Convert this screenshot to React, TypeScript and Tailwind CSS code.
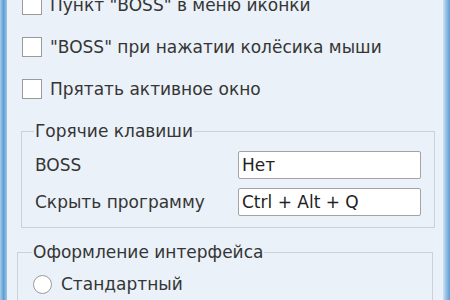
import { useState } from "react";

const Check = ({ label }: { label: string }) => (
  <label className="flex items-center h-[42px] shrink-0">
    <span className="ml-[15px] w-[20px] h-[20px] border border-[#9a9a9a] bg-white shrink-0" />
    <span className="ml-[8px] whitespace-nowrap">{label}</span>
  </label>
);

export default function App() {
  const [boss, setBoss] = useState("Нет");
  const [hide, setHide] = useState("Ctrl + Alt + Q");

  return (
    <div
      className="w-[450px] h-[300px] overflow-hidden flex items-start bg-[#eaf1f8] text-[#353535] text-[17px] leading-[20px]"
      style={{ fontFamily: '"DejaVu Sans", Tahoma, sans-serif' }}
    >
      <div className="w-[7px] h-full shrink-0 bg-gradient-to-r from-[#a9cbe8] via-[#5d9fd4] to-[#9cc4e6]" />
      <div className="flex-1 -mt-[16px]">
        <Check label={'Пункт "BOSS" в меню иконки'} />
        <Check label={'"BOSS" при нажатии колёсика мыши'} />
        <Check label="Прятать активное окно" />

        <fieldset className="ml-[14px] w-[412px] mt-[11px] h-[107px] border border-[#c9d2da] px-[13px]">
          <legend className="px-[1px] ml-[-1px]">Горячие клавиши</legend>
          <div className="flex items-center h-[28px] mt-[10px]">
            <span className="w-[203px]">BOSS</span>
            <input
              value={boss}
              onChange={(e) => setBoss(e.target.value)}
              className="w-[183px] h-[28px] border border-[#a3a3a3] rounded-[2px] bg-white px-[3px] outline-none text-[#222] caret-black"
            />
          </div>
          <div className="flex items-center h-[28px] mt-[9px]">
            <span className="w-[203px]">Скрыть программу</span>
            <input
              value={hide}
              onChange={(e) => setHide(e.target.value)}
              className="w-[183px] h-[28px] border border-[#a3a3a3] rounded-[2px] bg-white px-[3px] outline-none text-[#222]"
            />
          </div>
        </fieldset>

        <fieldset className="ml-[10px] w-[416px] mt-[14px] h-[80px] border border-[#c9d2da] px-[15px]">
          <legend className="px-[1px] ml-[-1px]">Оформление интерфейса</legend>
          <label className="flex items-center mt-[12px]">
            <span className="w-[19px] h-[19px] rounded-full border border-[#9a9a9a] bg-white shrink-0" />
            <span className="ml-[9px]">Стандартный</span>
          </label>
        </fieldset>
      </div>
      <div className="w-[7px] h-full shrink-0 bg-gradient-to-r from-[#cfe2f3] via-[#8fbde3] to-[#5c9ed4]" />
    </div>
  );
}
